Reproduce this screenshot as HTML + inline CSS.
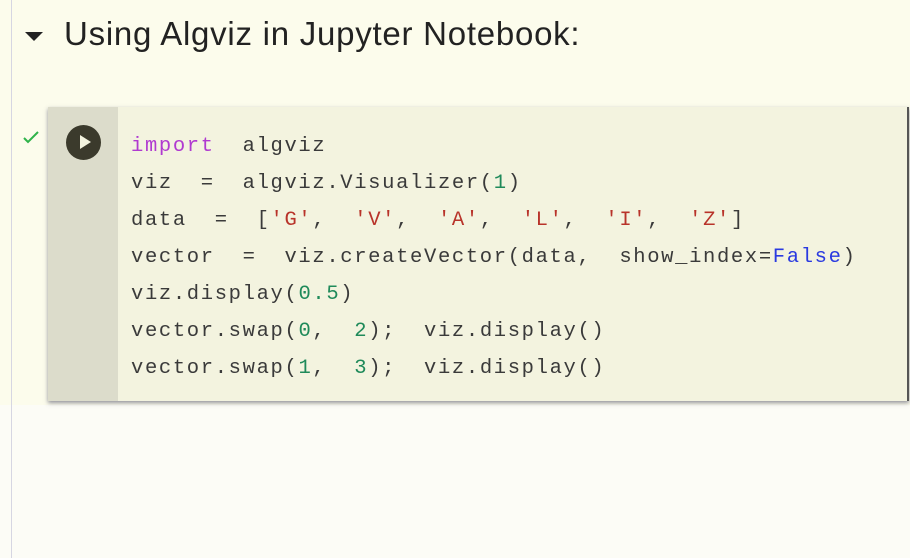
<!DOCTYPE html>
<html><head><meta charset="utf-8"><style>
html,body{margin:0;padding:0}
body{width:910px;height:558px;position:relative;overflow:hidden;background:#fcfcf6;font-family:"Liberation Sans",sans-serif}
.top{position:absolute;left:0;top:0;width:910px;height:405px;background:#fcfcec}
.vline{position:absolute;left:11px;top:0;width:1px;height:558px;background:#d6d6e2}
.tri{position:absolute;left:25px;top:32px;width:0;height:0;border-left:9px solid transparent;border-right:9px solid transparent;border-top:9px solid #222}
.title{position:absolute;left:64px;top:15px;font-size:33px;color:#222;white-space:nowrap;letter-spacing:0.75px}
.cell{position:absolute;left:48px;top:107px;width:859px;height:294px;background:#f3f3df;box-shadow:0 2px 4px rgba(60,60,90,.55);border-right:2px solid #555}
.gut{position:absolute;left:0;top:0;width:70px;height:294px;background:#dcdccb}
.play{position:absolute;left:18px;top:18px;width:35px;height:35px;border-radius:50%;background:#3b3a2c}
.play:after{content:"";position:absolute;left:14px;top:10px;border-top:7.5px solid transparent;border-bottom:7.5px solid transparent;border-left:11px solid #f3f3df}
.check{position:absolute;left:22px;top:130px}
.code{position:absolute;left:131px;top:128px;font-family:"Liberation Mono",monospace;font-size:20.5px;letter-spacing:1.65px;line-height:37px;color:#3a3a3a;white-space:pre}
.k{color:#b03ad0}.n{color:#1f8a5a}.s{color:#b8332a}.b{color:#2a3ae0}
</style></head><body>
<div class="top"></div>
<div class="vline"></div>
<div class="tri"></div>
<div class="title">Using Algviz in Jupyter Notebook:</div>
<svg class="check" width="18" height="14" viewBox="0 0 18 14"><path d="M2 8 L6 12 L16 2" stroke="#2fb34a" stroke-width="2" fill="none"/></svg>
<div class="cell"><div class="gut"><div class="play"></div></div></div>
<div class="code"><span class="k">import</span>  algviz
viz  =  algviz.Visualizer(<span class="n">1</span>)
data  =  [<span class="s">'G'</span>,  <span class="s">'V'</span>,  <span class="s">'A'</span>,  <span class="s">'L'</span>,  <span class="s">'I'</span>,  <span class="s">'Z'</span>]
vector  =  viz.createVector(data,  show_index=<span class="b">False</span>)
viz.display(<span class="n">0.5</span>)
vector.swap(<span class="n">0</span>,  <span class="n">2</span>);  viz.display()
vector.swap(<span class="n">1</span>,  <span class="n">3</span>);  viz.display()</div>
</body></html>
